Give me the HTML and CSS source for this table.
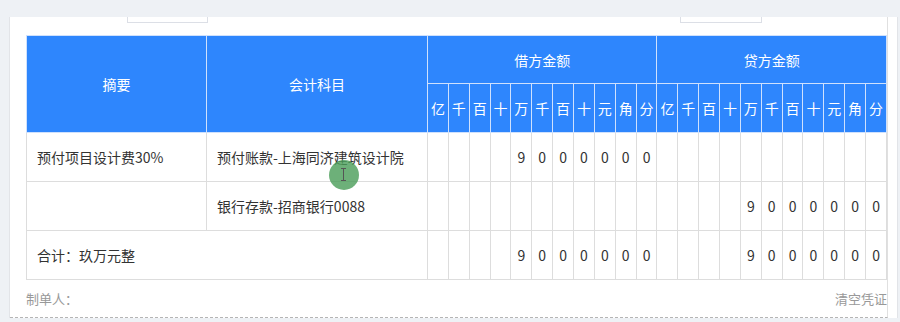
FILE: index.html
```html
<!DOCTYPE html>
<html lang="zh-CN">
<head>
  <meta charset="UTF-8" />
  <meta name="viewport" content="width=device-width, initial-scale=1" />
  <title>记账凭证</title>
  <link rel="stylesheet" href="styles.css">
</head>
<body>
  <div class="voucher">
    <div class="sheet">
      <!-- 上方日期 / 凭证号输入框（已滚出可视区） -->
      <div class="toolbar">
        <div class="tool-input first"></div>
        <div class="tool-input second"></div>
      </div>

      <table class="entry-table">
        <thead>
          <tr>
            <th rowspan="2" class="col-summary">摘要</th>
            <th rowspan="2" class="col-subject">会计科目</th>
            <th colspan="11">借方金额</th>
            <th colspan="11">贷方金额</th>
          </tr>
          <tr class="unit-row">
            <th>亿</th><th>千</th><th>百</th><th>十</th><th>万</th><th>千</th><th>百</th><th>十</th><th>元</th><th>角</th><th>分</th>
            <th>亿</th><th>千</th><th>百</th><th>十</th><th>万</th><th>千</th><th>百</th><th>十</th><th>元</th><th>角</th><th>分</th>
          </tr>
        </thead>
        <tbody>
          <tr>
            <td class="text-cell">预付项目设计费30%</td>
            <td class="text-cell subject-cell">
              预付账款-上海同济建筑设计院
              <span class="click-mark"><span class="ibeam"></span></span>
            </td>
            <td></td><td></td><td></td><td></td><td>9</td><td>0</td><td>0</td><td>0</td><td>0</td><td>0</td><td>0</td>
            <td></td><td></td><td></td><td></td><td></td><td></td><td></td><td></td><td></td><td></td><td></td>
          </tr>
          <tr>
            <td class="text-cell"></td>
            <td class="text-cell">银行存款-招商银行0088</td>
            <td></td><td></td><td></td><td></td><td></td><td></td><td></td><td></td><td></td><td></td><td></td>
            <td></td><td></td><td></td><td></td><td>9</td><td>0</td><td>0</td><td>0</td><td>0</td><td>0</td><td>0</td>
          </tr>
          <tr>
            <td class="text-cell" colspan="2">合计：玖万元整</td>
            <td></td><td></td><td></td><td></td><td>9</td><td>0</td><td>0</td><td>0</td><td>0</td><td>0</td><td>0</td>
            <td></td><td></td><td></td><td></td><td>9</td><td>0</td><td>0</td><td>0</td><td>0</td><td>0</td><td>0</td>
          </tr>
        </tbody>
      </table>

      <div class="sheet-foot">
        <span>制单人：</span>
        <a class="clear-btn">清空凭证</a>
      </div>
    </div>
  </div>
</body>
</html>
```

FILE: styles.css
```css
body {
  margin: 0;
  background-color: #eef1f5;
  font-family: "Noto Sans CJK SC", "Microsoft YaHei", sans-serif;
  font-size: 14px;
  color: #333;
}

.voucher {
  margin: 17px 0 0 9px;
  width: 887px;
  background-color: #fff;
  border-left: 1px solid #e2e4e8;
  border-right: 1px solid #e2e4e8;
}

.sheet {
  width: 861px;
  padding-left: 16px;
  border-right: 1px solid #e0e0e0;
  border-bottom: 1px dashed #b5b5b5;
}

/* 顶部输入框，只露出底边 */
.toolbar {
  display: flex;
  height: 6px;
  margin-bottom: 12px;
}

.tool-input {
  height: 5px;
  border: 1px solid #dcdfe6;
  border-top: none;
}

.tool-input.first {
  width: 79px;
  margin-left: 101px;
}

.tool-input.second {
  width: 80px;
  margin-left: 472px;
}

.entry-table {
  width: 861px;
  border-collapse: collapse;
  table-layout: fixed;
}

.entry-table th {
  background-color: #2e86fd;
  color: #fff;
  font-weight: normal;
  font-size: 14px;
  border: 1px solid #cfe1fd;
  height: 47px;
  padding: 0;
}

.entry-table th.col-summary {
  width: 179px;
}

.entry-table th.col-subject {
  width: 220px;
}

.unit-row th {
  height: 48px;
}

.entry-table td {
  border: 1px solid #dddddd;
  height: 48px;
  padding: 0;
  text-align: center;
  font-size: 14px;
}

.entry-table td.text-cell {
  text-align: left;
  padding-left: 10px;
}

.subject-cell {
  position: relative;
}

/* 鼠标点击提示 */
.click-mark {
  position: absolute;
  left: 122px;
  top: 27px;
  width: 30px;
  height: 30px;
  border-radius: 50%;
  background-color: rgba(72, 156, 88, 0.8);
}

.ibeam {
  position: absolute;
  left: 14px;
  top: 8px;
  width: 1px;
  height: 13px;
  background-color: #555;
}

.ibeam::before,
.ibeam::after {
  content: "";
  position: absolute;
  left: -2px;
  width: 5px;
  height: 1px;
  background-color: #555;
}

.ibeam::before {
  top: 0;
}

.ibeam::after {
  bottom: 0;
}

.sheet-foot {
  display: flex;
  justify-content: space-between;
  align-items: center;
  height: 37px;
  font-size: 13px;
  color: #999;
}

.clear-btn {
  cursor: pointer;
}
```
